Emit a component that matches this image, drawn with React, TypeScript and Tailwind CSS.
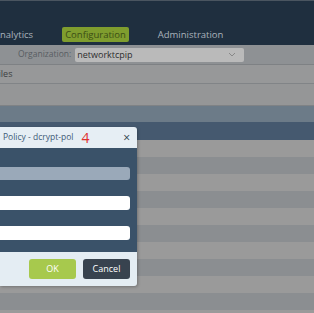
import type { ReactNode } from "react";

function NavItem({ children, active }: { children: ReactNode; active?: boolean }) {
  return (
    <span
      className={
        active
          ? "rounded-[2px] bg-[#7f9d2e] px-[3px] py-[1px] text-[#3b4d15]"
          : "px-[3px] py-[1px] text-[#aab3bc]"
      }
    >
      {children}
    </span>
  );
}

function Stripe({ dark }: { dark?: boolean }) {
  return <div className={dark ? "h-[17px] bg-[#8b8e91]" : "h-[17px] bg-[#9a9a9a]"} />;
}

function Field({ disabled }: { disabled?: boolean }) {
  return (
    <div
      className={
        disabled
          ? "h-[13px] w-[130px] rounded-r-[3px] bg-[#9aa9b9]"
          : "h-[14px] w-[130px] rounded-r-[3px] bg-white"
      }
    />
  );
}

export default function App() {
  const stripes = [false, true, false, true, false, true, false, true, false, true, false];

  return (
    <div
      className="relative h-[313px] w-[314px] overflow-hidden bg-[#9a9a9a]"
      style={{ fontFamily: '"Open Sans", "Liberation Sans", sans-serif' }}
    >
      {/* top nav */}
      <div className="flex h-[45px] flex-col justify-end border-t border-[#4a5560] bg-[#1f2f3f] pb-[3px]">
        <div className="ml-[-9px] flex items-center gap-[26px] text-[9.5px] leading-[13px]">
          <NavItem>Analytics</NavItem>
          <NavItem active>Configuration</NavItem>
          <NavItem>Administration</NavItem>
        </div>
      </div>

      {/* organization row */}
      <div className="flex h-[20px] items-center border-b border-[#7e8184] bg-[#8e9194] pl-[18px]">
        <span className="text-[8.5px] text-[#585d62]">Organization:</span>
        <div className="ml-[4px] flex h-[14px] w-[169px] items-center justify-between rounded-[2px] bg-[#bababa] pl-[2px] pr-[8px]">
          <span className="text-[9px] text-[#2e2e2e]">networktcpip</span>
          <svg width="8" height="5" viewBox="0 0 8 5" fill="none">
            <path d="M1 1l3 3 3-3" stroke="#888" strokeWidth="1" />
          </svg>
        </div>
      </div>

      {/* table rows */}
      <div className="flex h-[19px] items-center border-b border-[#818487] bg-[#979899]">
        <span className="ml-[-19px] text-[9px] text-[#3c3f42]">Profiles</span>
      </div>
      <div className="h-[22px] border-b border-[#7f8285] bg-[#959697]" />
      <div className="h-[16px] bg-[#6c7b88]" />
      <div className="h-[18px] bg-[#45596f]" />
      {stripes.map((d, i) => (
        <Stripe key={i} dark={d} />
      ))}

      {/* dialog */}
      <div className="absolute left-0 top-[127px] flex w-[137px] flex-col overflow-hidden rounded-tr-[3px] rounded-br-[3px] shadow-[1px_1px_3px_rgba(0,0,0,0.25)]">
        <div className="flex h-[21px] items-center bg-[#e6eef4] pl-[3px] pr-[7px]">
          <span className="text-[8.5px] text-[#3e5a77]">Policy - dcrypt-pol</span>
          <span className="ml-[8px] text-[14px] leading-none text-[#e0302c]">4</span>
          <span className="ml-auto text-[12px] leading-none text-[#2d3a47]">×</span>
        </div>
        <div className="flex h-[104px] flex-col gap-[16px] bg-[#3a5269] pt-[19px]">
          <Field disabled />
          <Field />
          <Field />
        </div>
        <div className="flex h-[34px] items-center justify-end gap-[7px] bg-[#e4edf3] pr-[7px]">
          <button className="h-[20px] w-[47px] rounded-[3px] bg-[#a7c94d] text-[9px] text-white">
            OK
          </button>
          <button className="h-[20px] w-[47px] rounded-[3px] bg-[#38434f] text-[9px] text-white">
            Cancel
          </button>
        </div>
      </div>
    </div>
  );
}
